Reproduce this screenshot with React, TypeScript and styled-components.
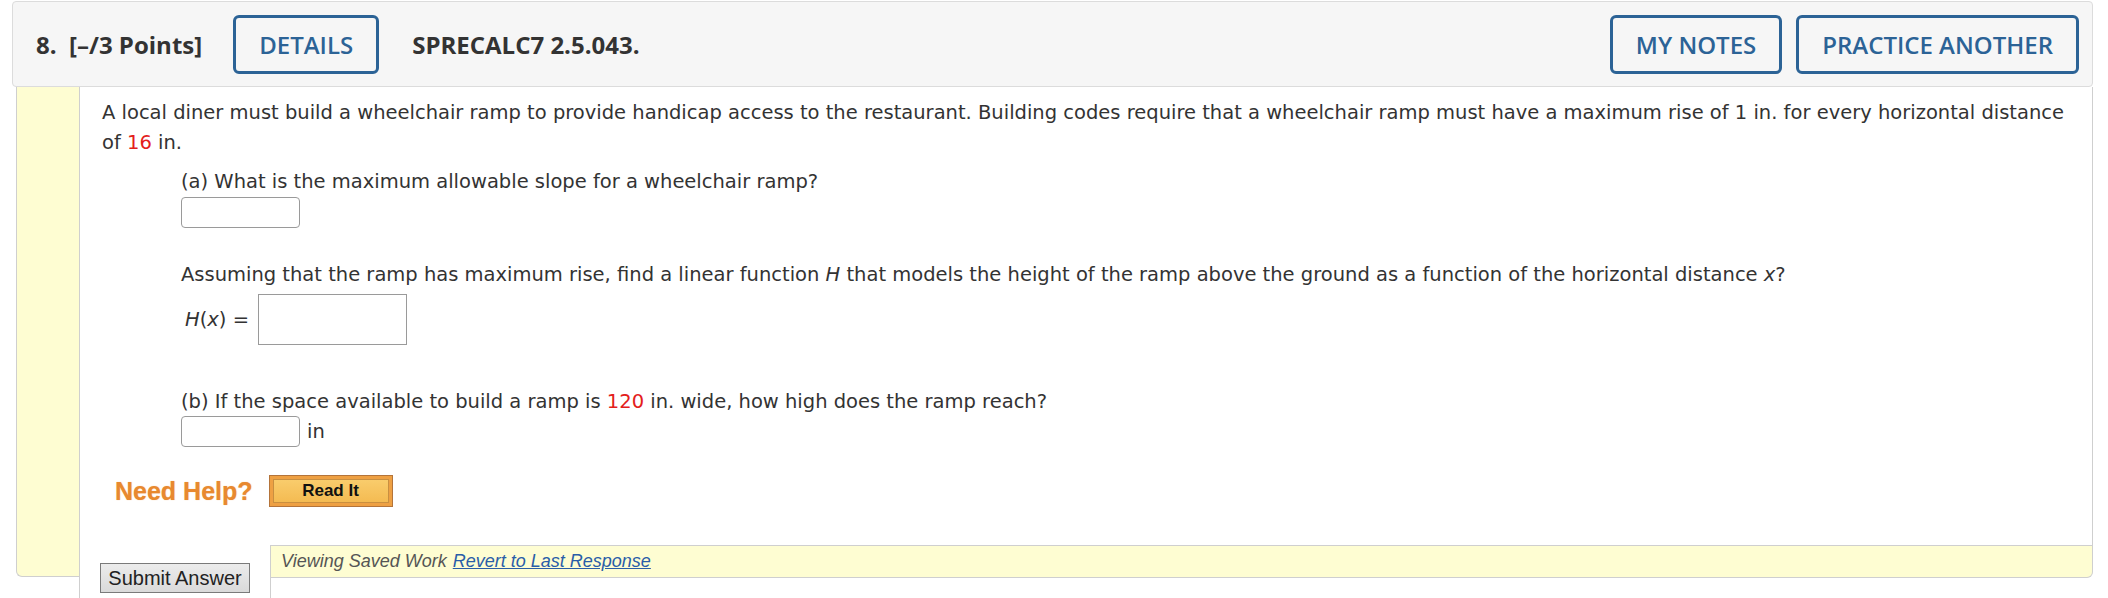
import styled, { createGlobalStyle } from 'styled-components';

const GlobalStyle = createGlobalStyle`
  html, body {
    margin: 0;
    padding: 0;
    background: #ffffff;
  }
  * {
    box-sizing: border-box;
  }
`;

const Page = styled.div`
  padding: 1px 0 0 12px;
  width: 2093px;
`;

const Header = styled.div`
  display: flex;
  align-items: center;
  height: 86px;
  padding: 0 13px 0 23px;
  background: #f6f6f6;
  border: 1px solid #dcdcdc;
  border-radius: 4px;
  font-family: 'Open Sans', 'Liberation Sans', sans-serif;
  color: #333333;
`;

const HeaderTitle = styled.span`
  font-size: 24px;
  font-weight: 700;
  margin-right: ${(p: { $gap: number }) => p.$gap}px;
  white-space: nowrap;
`;

const Spacer = styled.div`
  flex: 1;
`;

const OutlineButton = styled.button<{ $gap?: number }>`
  height: 59px;
  padding: 0 23px;
  margin-right: ${(p) => p.$gap ?? 0}px;
  background: transparent;
  border: 3px solid #2c6396;
  border-radius: 6px;
  color: #2c6396;
  font-family: 'Open Sans', 'Liberation Sans', sans-serif;
  font-size: 24px;
  font-weight: 600;
  white-space: nowrap;
  cursor: pointer;
`;

const Panel = styled.div`
  display: flex;
  align-items: flex-start;
  margin-left: 4px;
`;

const Rail = styled.div`
  width: 63px;
  height: 490px;
  background: #fefdd2;
  border-left: 1px solid #cfcfcf;
  border-bottom: 1px solid #cfcfcf;
  border-bottom-left-radius: 6px;
  flex-shrink: 0;
`;

const Main = styled.div`
  flex: 1;
  display: flex;
  flex-direction: column;
  border-left: 1px solid #cfcfcf;
`;

const Content = styled.div`
  height: 458px;
  padding: 11px 20px 0 22px;
  border-right: 1px solid #cfcfcf;
  font-family: 'DejaVu Sans', Verdana, sans-serif;
  font-size: 19.5px;
  line-height: 30px;
  color: #333333;
`;

const Para = styled.p`
  margin: 0;
`;

const Red = styled.span`
  color: #e3201b;
`;

const Part = styled.div<{ $top: number }>`
  margin: ${(p) => p.$top}px 0 0 79px;
`;

const AnswerBox = styled.div<{ $w: number; $h: number; $round?: boolean }>`
  width: ${(p) => p.$w}px;
  height: ${(p) => p.$h}px;
  border: 1px solid #9a9a9a;
  border-radius: ${(p) => (p.$round ? 4 : 0)}px;
  background: #ffffff;
  flex-shrink: 0;
`;

const InlineRow = styled.div<{ $gap: number; $top: number; $left?: number }>`
  display: flex;
  align-items: center;
  gap: ${(p) => p.$gap}px;
  margin: ${(p) => p.$top}px 0 0 ${(p) => p.$left ?? 0}px;
`;

const Italic = styled.i`
  font-family: 'DejaVu Sans', Verdana, sans-serif;
`;

const HelpRow = styled.div`
  display: flex;
  align-items: center;
  gap: 16px;
  margin: 28px 0 0 13px;
`;

const NeedHelp = styled.span`
  font-family: 'Liberation Sans', Arial, sans-serif;
  font-weight: 700;
  font-size: 25px;
  color: #e8892f;
  text-shadow: 0 0 1px rgba(232, 137, 47, 0.6);
`;

const ReadIt = styled.button`
  width: 124px;
  height: 32px;
  padding: 3px;
  background: #eea043;
  border: 1px solid #b4743a;
  cursor: pointer;
`;

const ReadItInner = styled.span`
  display: flex;
  align-items: center;
  justify-content: center;
  height: 100%;
  background: linear-gradient(#f9cc6c, #f4bb52);
  border: 1px solid #c98f40;
  font-family: 'Liberation Sans', Arial, sans-serif;
  font-weight: 700;
  font-size: 17px;
  color: #111111;
`;

const Footer = styled.div`
  display: flex;
  height: 60px;
`;

const SubmitCell = styled.div`
  width: 190px;
  padding: 18px 0 0 20px;
  flex-shrink: 0;
`;

const SubmitButton = styled.button`
  width: 150px;
  height: 30px;
  padding: 0;
  background: linear-gradient(#ececec, #dadada);
  border: 1px solid #7a7a7a;
  font-family: 'Liberation Sans', Arial, sans-serif;
  font-size: 20px;
  color: #222222;
  cursor: pointer;
`;

const SavedCell = styled.div`
  flex: 1;
  border-left: 1px solid #cfcfcf;
`;

const SavedBar = styled.div`
  display: flex;
  align-items: center;
  gap: 6px;
  height: 33px;
  padding: 0 10px;
  background: #fefdd2;
  border-top: 1px solid #cfcfcf;
  border-bottom: 1px solid #cfcfcf;
  border-right: 1px solid #cfcfcf;
  border-bottom-right-radius: 6px;
  font-family: 'Liberation Sans', Arial, sans-serif;
  font-style: italic;
  font-size: 18px;
  color: #555555;
`;

const RevertLink = styled.a`
  color: #2a5ea8;
  text-decoration: underline;
  cursor: pointer;
`;

export default function App() {
  return (
    <Page>
      <GlobalStyle />
      <Header>
        <HeaderTitle $gap={31}>8.&nbsp; [–/3 Points]</HeaderTitle>
        <OutlineButton $gap={33}>DETAILS</OutlineButton>
        <HeaderTitle $gap={0}>SPRECALC7 2.5.043.</HeaderTitle>
        <Spacer />
        <OutlineButton $gap={14}>MY NOTES</OutlineButton>
        <OutlineButton>PRACTICE ANOTHER</OutlineButton>
      </Header>

      <Panel>
        <Rail />
        <Main>
          <Content>
            <Para>
              A local diner must build a wheelchair ramp to provide handicap access to the restaurant. Building codes
              require that a wheelchair ramp must have a maximum rise of 1 in. for every horizontal distance of{' '}
              <Red>16</Red> in.
            </Para>

            <Part $top={9}>
              <div>(a) What is the maximum allowable slope for a wheelchair ramp?</div>
              <AnswerBox $w={119} $h={31} $round />
            </Part>

            <Part $top={32}>
              <div>
                Assuming that the ramp has maximum rise, find a linear function <Italic>H</Italic> that models the
                height of the ramp above the ground as a function of the horizontal distance <Italic>x</Italic>?
              </div>
              <InlineRow $gap={9} $top={4} $left={4}>
                <span>
                  <Italic>H</Italic>(<Italic>x</Italic>) =
                </span>
                <AnswerBox $w={149} $h={51} />
              </InlineRow>
            </Part>

            <Part $top={42}>
              <div>
                (b) If the space available to build a ramp is <Red>120</Red> in. wide, how high does the ramp reach?
              </div>
              <InlineRow $gap={7} $top={-1}>
                <AnswerBox $w={119} $h={31} $round />
                <span>in</span>
              </InlineRow>
            </Part>

            <HelpRow>
              <NeedHelp>Need Help?</NeedHelp>
              <ReadIt>
                <ReadItInner>Read It</ReadItInner>
              </ReadIt>
            </HelpRow>
          </Content>

          <Footer>
            <SubmitCell>
              <SubmitButton>Submit Answer</SubmitButton>
            </SubmitCell>
            <SavedCell>
              <SavedBar>
                Viewing Saved Work <RevertLink>Revert to Last Response</RevertLink>
              </SavedBar>
            </SavedCell>
          </Footer>
        </Main>
      </Panel>
    </Page>
  );
}
